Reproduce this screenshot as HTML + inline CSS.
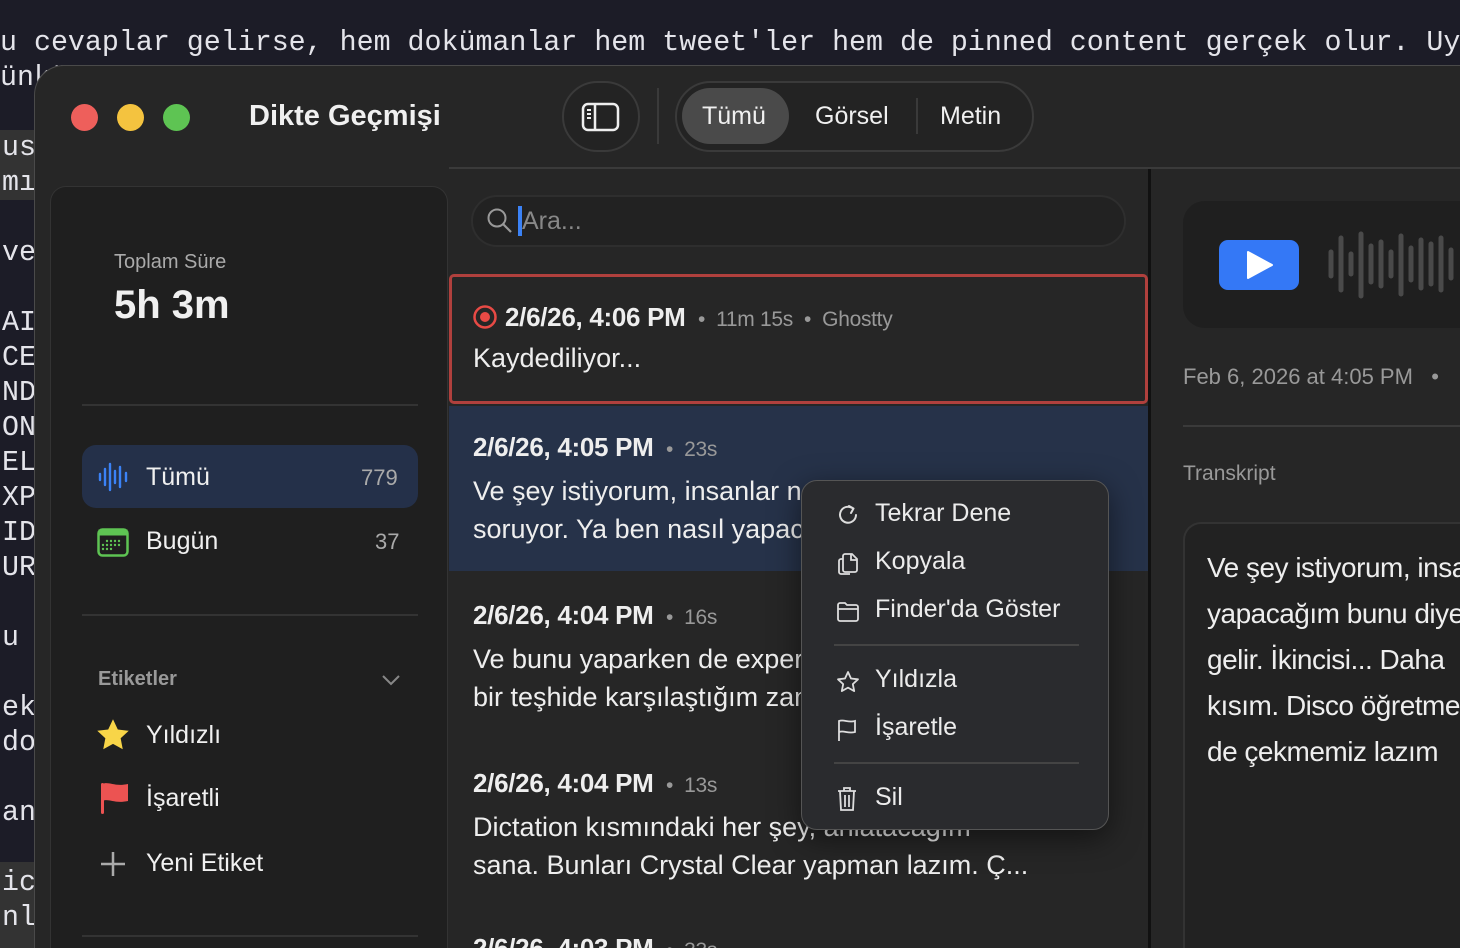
<!DOCTYPE html>
<html style="overflow:hidden"><head><meta charset="utf-8"><style>
*{box-sizing:border-box;margin:0;padding:0}
html,body{width:1460px;height:948px;overflow:hidden}
body{background:#1c1c27;font-family:"Liberation Sans","DejaVu Sans",sans-serif;position:relative;color:#e8e8e8}
.term{position:absolute;font-family:"Liberation Mono","DejaVu Sans Mono",monospace;font-size:28.3px;color:#e4e4ea;white-space:pre;line-height:35px}
.win{position:absolute;left:34px;top:65px;width:1426px;height:883px;background:#262626;border-radius:30px 0 0 0;border:1px solid #4a4a4a;border-bottom:none;border-right:none;overflow:hidden}
.abs{position:absolute}
.dot{position:absolute;top:38px;width:27px;height:27px;border-radius:50%}
.side{position:absolute;left:15px;top:120px;width:398px;height:763px;background:#1f1f1f;border:1px solid #333;border-bottom:none;border-radius:16px 16px 0 0}
.t{position:absolute;white-space:nowrap}
.menu{position:absolute;left:801px;top:480px;width:308px;height:350px;background:#2a2b2e;border:1px solid #555;border-radius:16px;box-shadow:0 8px 30px rgba(0,0,0,.5)}
.menu .t{font-size:25px;color:#ececec;left:73px}
.menu svg{position:absolute;left:34px}
.sep{position:absolute;left:32px;width:245px;height:2px;background:#444}
</style></head><body>
<div class="term" style="left:0;top:26px;width:1460px;overflow:hidden">u cevaplar gelirse, hem dokümanlar hem tweet'ler hem de pinned content gerçek olur. Uy
ünkü</div>
<div class="abs" style="left:0;top:130px;width:34px;height:70px;background:#333"></div>
<div class="abs" style="left:0;top:862px;width:34px;height:86px;background:#333"></div>
<div class="term" style="left:2px;top:131px;height:817px;overflow:hidden">us
mı

ve

AI
CE
ND
ON
EL
XP
ID
UR

u

ek
do

an

ic
nl</div>
<div class="win">
 <div class="dot" style="left:36px;background:#ee5f5b"></div>
 <div class="dot" style="left:82px;background:#f4c33f"></div>
 <div class="dot" style="left:128px;background:#5ec453"></div>
 <div class="t" style="left:214px;top:34px;font-size:29px;font-weight:bold;color:#f0f0f0">Dikte Geçmişi</div>
 <div class="abs" style="left:527px;top:15px;width:78px;height:71px;border-radius:36px;border:2px solid #3a3a3a;background:#232323"></div>
 <svg class="abs" style="left:546px;top:36px" width="40" height="30" viewBox="0 0 40 30"><rect x="2" y="2" width="35" height="26" rx="5" fill="none" stroke="#eee" stroke-width="2.5"/><line x1="14" y1="2" x2="14" y2="28" stroke="#eee" stroke-width="2.5"/><line x1="6" y1="8" x2="10" y2="8" stroke="#eee" stroke-width="2"/><line x1="6" y1="12" x2="10" y2="12" stroke="#eee" stroke-width="2"/><line x1="6" y1="16" x2="10" y2="16" stroke="#eee" stroke-width="2"/></svg>
 <div class="abs" style="left:622px;top:22px;width:2px;height:56px;background:#3a3a3a"></div>
 <div class="abs" style="left:640px;top:15px;width:359px;height:71px;border-radius:36px;border:2px solid #3a3a3a;background:#232323"></div>
 <div class="abs" style="left:647px;top:22px;width:107px;height:56px;border-radius:28px;background:#4a4a4a"></div>
 <div class="t" style="left:667px;top:36px;font-size:25px;color:#f0f0f0">Tümü</div>
 <div class="t" style="left:780px;top:36px;font-size:25px;color:#f0f0f0">Görsel</div>
 <div class="abs" style="left:881px;top:32px;width:2px;height:36px;background:#3a3a3a"></div>
 <div class="t" style="left:905px;top:36px;font-size:25px;color:#f0f0f0">Metin</div>
 <div class="abs" style="left:414px;top:101px;width:1012px;height:2px;background:#3a3a3a"></div>

 <div class="side">
  <div class="t" style="left:63px;top:64px;font-size:20px;color:#aaa">Toplam Süre</div>
  <div class="t" style="left:63px;top:96px;font-size:40px;font-weight:bold;color:#f0f0f0">5h 3m</div>
  <div class="abs" style="left:31px;top:217px;width:336px;height:2px;background:#333"></div>
  <div class="abs" style="left:31px;top:258px;width:336px;height:63px;border-radius:14px;background:#243049"></div>
  <svg class="abs" style="left:47px;top:274px" width="32" height="32" viewBox="0 0 32 32" stroke="#3b82f6" stroke-width="2.4" stroke-linecap="round"><line x1="2" y1="13" x2="2" y2="19"/><line x1="7" y1="8" x2="7" y2="24"/><line x1="12" y1="3" x2="12" y2="29"/><line x1="17" y1="10" x2="17" y2="22"/><line x1="22" y1="6" x2="22" y2="26"/><line x1="28" y1="12" x2="28" y2="20"/></svg>
  <div class="t" style="left:95px;top:276px;font-size:25px;color:#f0f0f0">Tümü</div>
  <div class="t" style="left:310px;top:278px;font-size:22px;color:#aaa">779</div>
  <svg class="abs" style="left:46px;top:341px" width="32" height="30" viewBox="0 0 32 30"><rect x="1.5" y="1.5" width="29" height="26" rx="4" fill="none" stroke="#5ec453" stroke-width="2.5"/><rect x="1.5" y="1.5" width="29" height="6" fill="#5ec453"/><g fill="#5ec453"><circle cx="10" cy="13" r="1.2"/><circle cx="14" cy="13" r="1.2"/><circle cx="18" cy="13" r="1.2"/><circle cx="22" cy="13" r="1.2"/><circle cx="6" cy="17" r="1.2"/><circle cx="10" cy="17" r="1.2"/><circle cx="14" cy="17" r="1.2"/><circle cx="18" cy="17" r="1.2"/><circle cx="22" cy="17" r="1.2"/><circle cx="6" cy="21" r="1.2"/><circle cx="10" cy="21" r="1.2"/><circle cx="14" cy="21" r="1.2"/></g></svg>
  <div class="t" style="left:95px;top:340px;font-size:25px;color:#f0f0f0">Bugün</div>
  <div class="t" style="left:324px;top:342px;font-size:22px;color:#aaa">37</div>
  <div class="abs" style="left:31px;top:427px;width:336px;height:2px;background:#333"></div>
  <div class="t" style="left:47px;top:481px;font-size:20px;font-weight:bold;color:#999">Etiketler</div>
  <svg class="abs" style="left:330px;top:486px" width="20" height="14" viewBox="0 0 20 14"><path d="M2 3l8 8 8-8" fill="none" stroke="#888" stroke-width="2"/></svg>
  <svg class="abs" style="left:44px;top:530px" width="36" height="36" viewBox="0 0 24 24"><path d="M12 1.5l3.2 6.8 7.3.9-5.4 5 1.4 7.3L12 17.9l-6.5 3.6 1.4-7.3-5.4-5 7.3-.9z" fill="#f8d548"/></svg>
  <div class="t" style="left:95px;top:534px;font-size:25px;color:#f0f0f0">Yıldızlı</div>
  <svg class="abs" style="left:48px;top:594px" width="32" height="36" viewBox="0 0 32 36"><path d="M3 3c7-3 12 3 26 0v17c-14 3-19-3-26 0z" fill="#ec5352"/><rect x="2" y="2" width="3" height="31" rx="1.5" fill="#ec5352"/></svg>
  <div class="t" style="left:95px;top:597px;font-size:25px;color:#f0f0f0">İşaretli</div>
  <svg class="abs" style="left:48px;top:663px" width="28" height="28" viewBox="0 0 28 28"><path d="M14 2v24M2 14h24" stroke="#aaa" stroke-width="2.5"/></svg>
  <div class="t" style="left:95px;top:662px;font-size:25px;color:#f0f0f0">Yeni Etiket</div>
  <div class="abs" style="left:31px;top:748px;width:336px;height:2px;background:#333"></div>
 </div>

 <div class="abs" style="left:436px;top:129px;width:655px;height:52px;border-radius:26px;border:2px solid #2e2e2e;background:#222"></div>
 <svg class="abs" style="left:451px;top:141px" width="28" height="28" viewBox="0 0 28 28"><circle cx="11" cy="11" r="8.5" fill="none" stroke="#999" stroke-width="2"/><path d="M17 17l8 8" stroke="#999" stroke-width="2.2"/></svg>
 <div class="abs" style="left:483px;top:140px;width:4px;height:30px;background:#3b82f6"></div>
 <div class="t" style="left:487px;top:141px;font-size:25px;color:#888">Ara...</div>
 <div class="abs" style="left:414px;top:208px;width:699px;height:130px;border:3px solid #b0403d;border-radius:5px;background:#262626"></div>
 <svg class="abs" style="left:437px;top:238px" width="26" height="26" viewBox="0 0 26 26"><circle cx="13" cy="13" r="10.5" fill="none" stroke="#e84a45" stroke-width="2.5"/><circle cx="13" cy="13" r="5" fill="#e84a45"/></svg>
 <div class="t" style="left:470px;top:236px;font-size:26px;font-weight:bold;color:#eee;letter-spacing:-0.3px">2/6/26, 4:06 PM <span style="font-weight:normal;color:#999;font-size:21px">&nbsp;•&nbsp; 11m 15s &nbsp;•&nbsp; Ghostty</span></div>
 <div class="t" style="left:438px;top:277px;font-size:27px;color:#eee">Kaydediliyor...</div>
 <div class="abs" style="left:414px;top:340px;width:699px;height:165px;background:#263249"></div>
 <div class="t" style="left:438px;top:366px;font-size:26px;font-weight:bold;color:#eee;letter-spacing:-0.3px">2/6/26, 4:05 PM <span style="font-weight:normal;color:#999;font-size:21px">&nbsp;•&nbsp; 23s</span></div>
 <div class="t" style="left:438px;top:406px;font-size:27px;color:#eee;line-height:38px">Ve şey istiyorum, insanlar ne yapacaklarını<br>soruyor. Ya ben nasıl yapacağım bunu diye</div>
 <div class="t" style="left:438px;top:534px;font-size:26px;font-weight:bold;color:#eee;letter-spacing:-0.3px">2/6/26, 4:04 PM <span style="font-weight:normal;color:#999;font-size:21px">&nbsp;•&nbsp; 16s</span></div>
 <div class="t" style="left:438px;top:574px;font-size:27px;color:#eee;line-height:38px">Ve bunu yaparken de expert bir şekilde<br>bir teşhide karşılaştığım zaman da</div>
 <div class="t" style="left:438px;top:702px;font-size:26px;font-weight:bold;color:#eee;letter-spacing:-0.3px">2/6/26, 4:04 PM <span style="font-weight:normal;color:#999;font-size:21px">&nbsp;•&nbsp; 13s</span></div>
 <div class="t" style="left:438px;top:742px;font-size:27px;color:#eee;line-height:38px">Dictation kısmındaki her şey, anlatacağım<br>sana. Bunları Crystal Clear yapman lazım. Ç...</div>
 <div class="t" style="left:438px;top:867px;font-size:26px;font-weight:bold;color:#eee;letter-spacing:-0.3px">2/6/26, 4:03 PM <span style="font-weight:normal;color:#999;font-size:21px">&nbsp;•&nbsp; 33s</span></div>
 <div class="abs" style="left:1113px;top:103px;width:3px;height:780px;background:#111"></div>

 <div class="abs" style="left:1148px;top:135px;width:278px;height:127px;border-radius:22px 0 0 22px;background:#1f1f1f"></div>
 <div class="abs" style="left:1184px;top:174px;width:80px;height:50px;border-radius:9px;background:#3478f6"></div>
 <svg class="abs" style="left:1210px;top:184px" width="30" height="30" viewBox="0 0 30 30"><path d="M3 2L27 15 3 28z" fill="#fff" stroke="#fff" stroke-linejoin="round" stroke-width="2"/></svg>
 <svg class="abs" style="left:1292px;top:158px" width="134" height="82" viewBox="0 0 134 82" stroke="#4a4a4a" stroke-width="5" stroke-linecap="round"><g transform="translate(2,0)"><line x1="2" y1="28" x2="2" y2="52"/><line x1="12" y1="14" x2="12" y2="66"/><line x1="22" y1="30" x2="22" y2="50"/><line x1="32" y1="10" x2="32" y2="72"/><line x1="42" y1="22" x2="42" y2="58"/><line x1="52" y1="18" x2="52" y2="62"/><line x1="62" y1="28" x2="62" y2="52"/><line x1="72" y1="12" x2="72" y2="70"/><line x1="82" y1="24" x2="82" y2="56"/><line x1="92" y1="16" x2="92" y2="64"/><line x1="102" y1="20" x2="102" y2="60"/><line x1="112" y1="14" x2="112" y2="66"/><line x1="122" y1="26" x2="122" y2="54"/></g></svg>
 <div class="t" style="left:1148px;top:298px;font-size:22px;color:#999">Feb 6, 2026 at 4:05 PM &nbsp; •</div>
 <div class="abs" style="left:1148px;top:359px;width:278px;height:2px;background:#3a3a3a"></div>
 <div class="t" style="left:1148px;top:396px;font-size:21px;color:#999">Transkript</div>
 <div class="abs" style="left:1148px;top:456px;width:278px;height:427px;border-radius:18px 0 0 0;border:2px solid #333;border-right:none;border-bottom:none;background:#222;overflow:hidden">
  <div class="t" style="left:22px;top:21px;font-size:28px;color:#eee;line-height:46px;letter-spacing:-0.5px">Ve şey istiyorum, insanlar<br>yapacağım bunu diye<br>gelir. İkincisi... Daha<br>kısım. Disco öğretmen<br>de çekmemiz lazım</div>
 </div>
</div>

<div class="menu">
 <svg style="top:22px" width="24" height="24" viewBox="0 0 24 24"><path d="M17 5.5A8 8 0 1 0 20 12" fill="none" stroke="#ddd" stroke-width="2" stroke-linecap="round"/><path d="M13 3l4.5 2.5L15 10" fill="none" stroke="#ddd" stroke-width="2" stroke-linecap="round" stroke-linejoin="round"/></svg>
 <div class="t" style="top:18px">Tekrar Dene</div>
 <svg style="top:69px" width="26" height="26" viewBox="0 0 26 26" fill="none" stroke="#ddd" stroke-width="1.8"><path d="M9 4h7l5 5v11a2 2 0 0 1-2 2H9a2 2 0 0 1-2-2V6a2 2 0 0 1 2-2z"/><path d="M7 9H5a2 2 0 0 0-2 2v11a2 2 0 0 0 2 2h9"/><path d="M15 4v6h6"/></svg>
 <div class="t" style="top:66px">Kopyala</div>
 <svg style="top:120px" width="24" height="22" viewBox="0 0 24 22" fill="none" stroke="#ddd" stroke-width="1.8"><path d="M2 4a2 2 0 0 1 2-2h5l2 2h9a2 2 0 0 1 2 2v12a2 2 0 0 1-2 2H4a2 2 0 0 1-2-2z"/><path d="M2 8h20"/></svg>
 <div class="t" style="top:114px">Finder'da Göster</div>
 <div class="sep" style="top:163px"></div>
 <svg style="top:189px" width="24" height="24" viewBox="0 0 24 24"><path d="M12 2l3 6.5 7 .8-5.2 4.8 1.4 7L12 17.6l-6.2 3.5 1.4-7L2 9.3l7-.8z" fill="none" stroke="#ddd" stroke-width="1.8" stroke-linejoin="round"/></svg>
 <div class="t" style="top:184px">Yıldızla</div>
 <svg style="top:237px" width="22" height="24" viewBox="0 0 22 24" fill="none" stroke="#ddd" stroke-width="1.8"><path d="M3 23V3c5-2 9 2 16 0v11c-7 2-11-2-16 0"/></svg>
 <div class="t" style="top:232px">İşaretle</div>
 <div class="sep" style="top:281px"></div>
 <svg style="top:305px" width="22" height="26" viewBox="0 0 22 26" fill="none" stroke="#ddd" stroke-width="1.8"><path d="M2 5h18M8 5V2h6v3M4 5l1 19h12l1-19M9 9v12M13 9v12"/></svg>
 <div class="t" style="top:302px">Sil</div>
</div>
</body></html>
